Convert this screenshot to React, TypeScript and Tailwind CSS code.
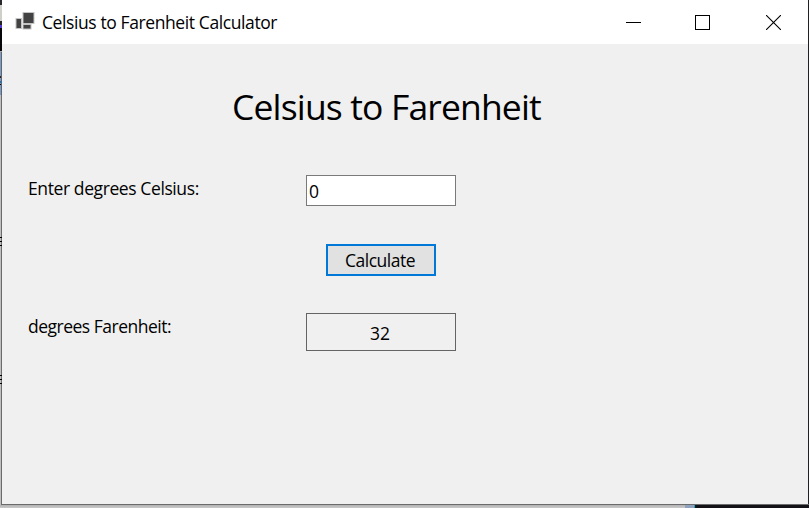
import { useState } from "react";

function AppIcon() {
  return (
    <svg width="20" height="20" viewBox="0 0 20 20" aria-hidden="true">
      <g fill="#424242" stroke="#c4c4c4" strokeWidth="1">
        <rect x="8" y="0.5" width="11" height="11" />
        <rect x="1" y="6.5" width="5.5" height="10" />
        <rect x="8" y="12.5" width="8" height="4.5" />
      </g>
    </svg>
  );
}

function TitleBar() {
  return (
    <header className="flex h-11 items-center bg-white pl-[13px]">
      <AppIcon />
      <h1 className="ml-[7px] grow whitespace-nowrap text-[17.5px] leading-6 tracking-[-0.4px]">
        Celsius to Farenheit Calculator
      </h1>
      <div className="flex items-center pr-[27px]">
        <button aria-label="Minimize" className="mr-[54px]">
          <svg className="block" width="15" height="15" shapeRendering="crispEdges">
            <path d="M0 7.5H15" stroke="black" />
          </svg>
        </button>
        <button aria-label="Maximize" className="mr-14">
          <svg className="block" width="15" height="15" shapeRendering="crispEdges">
            <rect x="0.5" y="0.5" width="14" height="14" fill="none" stroke="black" />
          </svg>
        </button>
        <button aria-label="Close">
          <svg className="block" width="15" height="15">
            <path d="M0 0L15 15M15 0L0 15" stroke="black" strokeWidth="1.1" />
          </svg>
        </button>
      </div>
    </header>
  );
}

function LeftEdge() {
  return (
    <div className="flex w-[2px] shrink-0 flex-col overflow-hidden bg-[#c0c0c0]">
      <div className="h-[5px] bg-[#29292b]" />
      <div className="h-4 bg-[#cfcfca]" />
      <div className="h-1 bg-[#242426]" />
      <div className="h-[3px] bg-[#513bd0]" />
      <div className="h-[23px] bg-[#08080c]" />
      <div className="h-px bg-[#b0a8a0]" />
      <div className="flex h-[43px] flex-col border-r border-[#5c6670] bg-[#819bc0]">
        <div className="mt-6 h-0.5 bg-[#33231c]" />
        <div className="mt-[3px] h-0.5 bg-[#1673bd]" />
        <div className="mt-px h-px bg-black" />
      </div>
      <div className="flex grow flex-col border-r border-[#6b6b6b]">
        <EdgeMarks className="mt-[142px]" />
        <EdgeMarks className="mt-[129px]" />
      </div>
    </div>
  );
}

function EdgeMarks({ className }: { className: string }) {
  return (
    <div className={`flex w-[2px] shrink-0 flex-col gap-[3px] ${className}`}>
      <div className="h-px bg-black" />
      <div className="h-px bg-black" />
      <div className="h-px bg-black" />
    </div>
  );
}

export default function App() {
  const [celsius, setCelsius] = useState("0");
  const [result, setResult] = useState(32);

  return (
    <div className="flex h-[508px] w-[809px] flex-col overflow-hidden bg-[#c0c0c0] font-['Open_Sans','Noto_Sans',sans-serif] text-black">
      <div className="flex h-[504px]">
        <LeftEdge />
        <main className="flex w-[806px] flex-col bg-[#f0f0f0]">
          <TitleBar />
          <h2 className="ml-[230px] mt-[37px] h-[50px] whitespace-nowrap text-[35.5px] leading-[50px] tracking-[-0.85px]">
            Celsius to Farenheit
          </h2>
          <div className="ml-[26px] mt-11 flex h-[31px]">
            <label htmlFor="celsius" className="w-[278px] whitespace-nowrap text-[17.5px] leading-[27px] tracking-[-0.4px]">
              Enter degrees Celsius:
            </label>
            <input
              id="celsius"
              value={celsius}
              onChange={(e) => setCelsius(e.target.value)}
              className="w-[150px] border border-[#7a7a7a] bg-white px-0.5 pt-px text-[17.5px] outline-none"
            />
          </div>
          <button
            onClick={() => setResult((Number(celsius) * 9) / 5 + 32)}
            className="ml-[324px] mt-[38px] h-8 w-[110px] border-2 border-[#0078d7] bg-[#e1e1e1] pr-0.5 text-[17.5px] leading-7 tracking-[-0.5px]"
          >
            Calculate
          </button>
          <div className="ml-[26px] mt-[37px] flex h-[38px]">
            <span className="w-[278px] whitespace-nowrap text-[17.5px] leading-[27px] tracking-[-0.5px]">
              degrees Farenheit:
            </span>
            <output className="w-[150px] border border-[#646464] pr-0.5 pt-px text-center text-[17.5px] leading-[36px]">
              {result}
            </output>
          </div>
        </main>
        <div className="w-px bg-[#202024]" />
      </div>
      <div className="ml-px h-px shrink-0 bg-[#6b6b6b]" />
      <div className="flex grow bg-linear-to-b from-[#b2b2b2] to-[#cacaca]">
        <div className="ml-[685px] w-[9px] bg-[#8fa2bd]" />
        <div className="w-px bg-[#12a4c8]" />
        <div className="grow bg-[#131217]" />
      </div>
    </div>
  );
}
